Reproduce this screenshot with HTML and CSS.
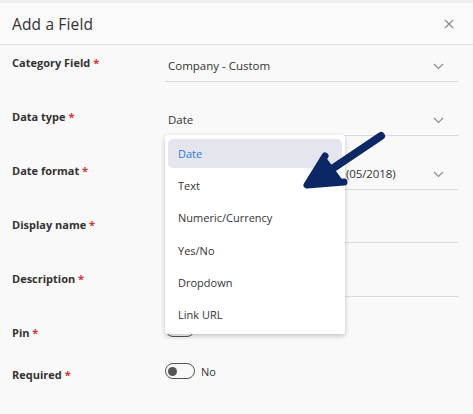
FILE: index.html
```html
<!DOCTYPE html>
<html>
<head>
<meta charset="utf-8">
<link rel="stylesheet" href="styles.css">
</head>
<body>
<div class="strip"></div>
<div class="dialog">
  <header class="header">
    <h1 class="title">Add a Field</h1>
    <svg class="close" width="10" height="10" viewBox="0 0 10 10"><path d="M1 1L9 9M9 1L1 9" stroke="#8a8a8a" stroke-width="1.2" fill="none"/></svg>
  </header>
  <div class="form">
    <div class="row">
      <div class="label">Category Field <span class="req">*</span></div>
      <div class="field select"><span class="value">Company - Custom</span><svg class="chev" width="11" height="7" viewBox="0 0 11 7"><path d="M1 1L5.5 5.5L10 1" stroke="#8a8a8a" stroke-width="1.1" fill="none"/></svg></div>
    </div>
    <div class="row">
      <div class="label">Data type <span class="req">*</span></div>
      <div class="field select"><span class="value">Date</span><svg class="chev" width="11" height="7" viewBox="0 0 11 7"><path d="M1 1L5.5 5.5L10 1" stroke="#8a8a8a" stroke-width="1.1" fill="none"/></svg></div>
    </div>
    <div class="row">
      <div class="label">Date format <span class="req">*</span></div>
      <div class="field select"><span class="value value-fmt">(05/2018)</span><svg class="chev" width="11" height="7" viewBox="0 0 11 7"><path d="M1 1L5.5 5.5L10 1" stroke="#8a8a8a" stroke-width="1.1" fill="none"/></svg></div>
    </div>
    <div class="row">
      <div class="label">Display name <span class="req">*</span></div>
      <div class="field"></div>
    </div>
    <div class="row">
      <div class="label">Description <span class="req">*</span></div>
      <div class="field"></div>
    </div>
    <div class="row row-toggle row-pin">
      <div class="label">Pin <span class="req">*</span></div>
      <div class="toggle-wrap"><span class="toggle"><span class="knob"></span></span></div>
    </div>
    <div class="row row-toggle">
      <div class="label">Required <span class="req">*</span></div>
      <div class="toggle-wrap"><span class="toggle"><span class="knob"></span></span><span class="toggle-text">No</span></div>
    </div>
  </div>
</div>

<ul class="menu">
  <li class="item active">Date</li>
  <li class="item">Text</li>
  <li class="item">Numeric/Currency</li>
  <li class="item">Yes/No</li>
  <li class="item">Dropdown</li>
  <li class="item">Link URL</li>
</ul>

<svg class="arrow" width="100" height="70" viewBox="0 0 100 70">
  <path d="M83 15L19 58" stroke="#0b2766" stroke-width="8" stroke-linecap="round" fill="none"/>
  <path d="M27 35L9 64L46 61" stroke="#0b2766" stroke-width="7" stroke-linecap="round" stroke-linejoin="round" fill="#0b2766"/>
</svg>
</body>
</html>
```
FILE: styles.css
```css
html, body {
  margin: 0;
  padding: 0;
}
body {
  width: 473px;
  height: 414px;
  overflow: hidden;
  background: #f9f9f9;
  font-family: "Open Sans", "Liberation Sans", sans-serif;
  color: #333;
  position: relative;
}
.strip {
  height: 3px;
  background: #efeff2;
}
.header {
  height: 41px;
  display: flex;
  align-items: center;
  justify-content: space-between;
  padding: 0 19px 0 12px;
  border-bottom: 1px solid #dddde6;
  background: #fafafa;
}
.title {
  margin: 0;
  font-size: 15.5px;
  font-weight: 400;
  color: #333;
  letter-spacing: 0.15px;
}
.close {
  display: block;
}
.form {
  padding-left: 12px;
}
.row {
  display: flex;
  height: 54px;
}
.label {
  width: 153px;
  flex: none;
  margin-top: 10px;
  font-size: 11px;
  line-height: 16px;
  font-weight: 700;
  color: #333;
  height: 16px;
}
.req {
  color: #d03333;
}
.field {
  margin-top: 12px;
  width: 293px;
  height: 24px;
  border-bottom: 1px solid #d9d9e3;
  box-sizing: border-box;
  display: flex;
  align-items: flex-start;
  justify-content: space-between;
  padding: 1px 14px 0 3px;
}
.field.select {
  height: 25px;
}
.value {
  font-size: 11.5px;
  line-height: 16px;
  color: #333;
  white-space: nowrap;
}
.value-fmt {
  padding-left: 178px;
  letter-spacing: -0.1px;
}
.chev {
  margin-top: 5px;
}
.row-pin {
  height: 42px;
}
.toggle-wrap {
  margin-top: 6px;
  display: flex;
  align-items: center;
  height: 16px;
}
.toggle {
  box-sizing: border-box;
  width: 30px;
  height: 16px;
  border: 1px solid #555;
  border-radius: 8px;
  display: flex;
  align-items: center;
  padding-left: 2px;
}
.knob {
  width: 9px;
  height: 9px;
  border-radius: 50%;
  background: #555;
}
.toggle-text {
  margin-left: 6px;
  font-size: 11px;
  color: #333;
}
.menu {
  position: absolute;
  left: 165px;
  top: 135px;
  width: 180px;
  box-sizing: border-box;
  margin: 0;
  padding: 4px 3px 5px;
  list-style: none;
  background: #fff;
  border-radius: 2px;
  box-shadow: 0 2px 5px rgba(0, 0, 0, 0.22);
  display: flex;
  flex-direction: column;
  gap: 3.2px;
}
.item {
  height: 29px;
  line-height: 29px;
  padding-left: 10px;
  font-size: 11px;
  color: #333;
  border-radius: 5px;
}
.item.active {
  background: #e5e5ee;
  color: #2b7be0;
}
.arrow {
  position: absolute;
  left: 298px;
  top: 121px;
}
```
